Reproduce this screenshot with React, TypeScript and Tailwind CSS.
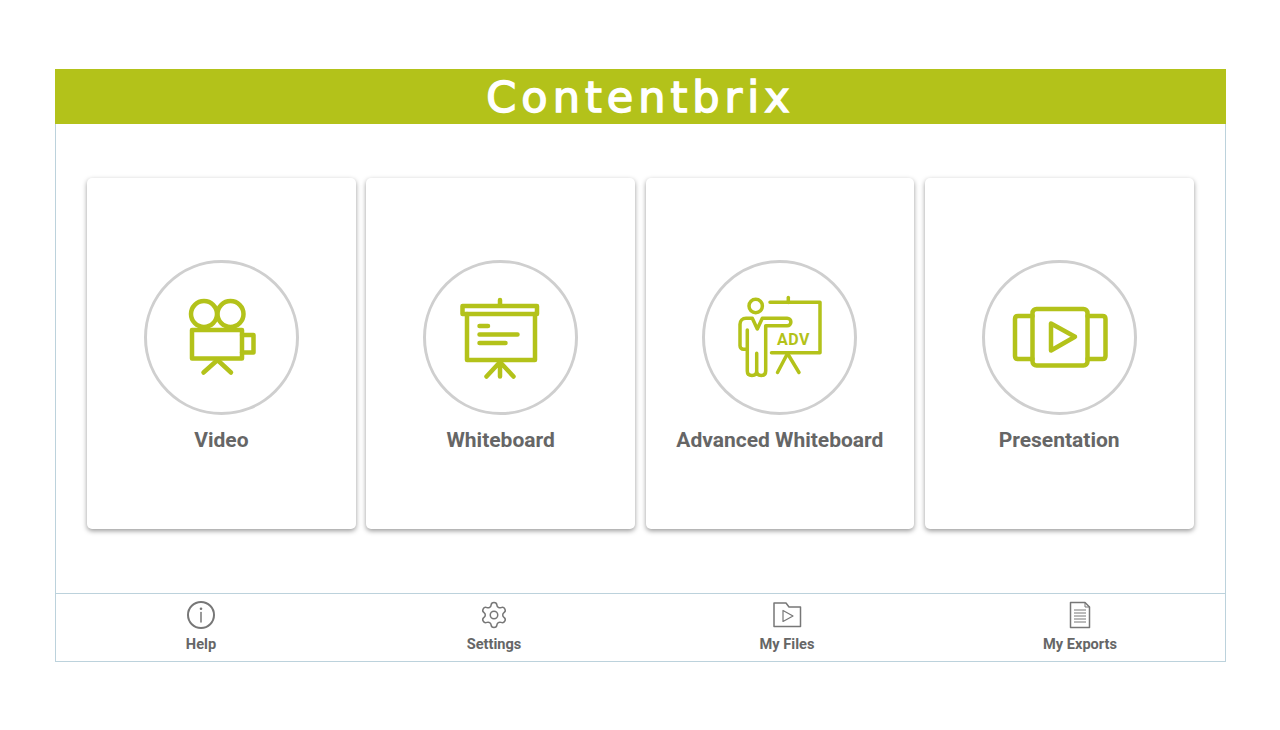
import { Settings } from 'lucide-react';
import type { ReactNode } from 'react';

const strokeProps = {
  fill: 'none',
  stroke: '#b3c21a',
  strokeWidth: 4.5,
  strokeLinecap: 'round' as const,
  strokeLinejoin: 'round' as const,
};

function VideoIcon() {
  return (
    <svg viewBox="0 0 155 155" className="w-full h-full" {...strokeProps}>
      <circle cx="60" cy="54" r="13" />
      <circle cx="86.5" cy="54" r="13" />
      <rect x="48" y="70" width="50" height="28.5" />
      <path d="M98 75h11.5v17.5H98" />
      <path d="M73.5 100 59.5 112.5M73.5 100 87 112.5" />
    </svg>
  );
}

function WhiteboardIcon() {
  return (
    <svg viewBox="0 0 155 155" className="w-full h-full" {...strokeProps}>
      <rect x="39.5" y="46" width="74.5" height="8" />
      <path d="M77 40v5" />
      <path d="M44 54v46h68V54" />
      <path d="M56.5 66H65M56.5 74.5h38M56.5 83h26" />
      <path d="M77 102 63.5 116.5M77 102v14.5M77 102l13.5 14.5" />
    </svg>
  );
}

function AdvancedIcon() {
  return (
    <svg viewBox="0 0 155 155" className="w-full h-full" {...strokeProps} strokeWidth={3.5}>
      <circle cx="53.7" cy="46" r="6.7" />
      <path d="M68 42.3h50v50.4H69.5" />
      <path d="M86.3 37.5v5" />
      <path d="M85.5 93.5 75.5 112.5M85.5 93.5l11.5 19" />
      <path d="M45.3 70v41c0 3 2 4.5 4.7 4.5s4.7-1.5 4.7-4.5V93.3M54.7 111c0 3 2 4.5 4.5 4.5s4.5-1.5 4.5-4.5V65.7h21.5c2 0 3.7-1.5 3.7-3.7s-1.7-3.7-3.7-3.7H60.3l-5 10.7-5-10.7H44c-3.5 0-6 2.5-6 6v21.5c0 2 1.5 3.5 3.5 3.5h3.8" />
      <text
        x="91.5"
        y="84.5"
        textAnchor="middle"
        fill="#b3c21a"
        stroke="none"
        fontFamily="Roboto, sans-serif"
        fontSize="16"
        fontWeight="700"
        letterSpacing="0.6"
      >
        ADV
      </text>
    </svg>
  );
}

function PresentationIcon() {
  return (
    <svg viewBox="0 0 155 155" className="w-full h-full" {...strokeProps}>
      <rect x="50.5" y="49" width="55" height="56.5" rx="4" />
      <path d="M50.5 56H36c-2 0-3 1-3 3v37c0 2 1 3 3 3h14.5" />
      <path d="M105.5 56H120.5c2 0 3 1 3 3v37c0 2-1 3-3 3H105.5" />
      <path d="M69 63.5V90.5L93 76.7Z" />
    </svg>
  );
}

function HelpIcon() {
  return (
    <svg viewBox="0 0 30 30" className="w-[30px] h-[30px]" fill="none" stroke="#777777" strokeLinecap="round">
      <circle cx="15" cy="15" r="13" strokeWidth="2" />
      <circle cx="15" cy="8.8" r="1.3" fill="#777777" stroke="none" />
      <path d="M15 12.5v9.5" strokeWidth="1.5" />
    </svg>
  );
}

function FolderPlayIcon() {
  return (
    <svg viewBox="0 0 30 30" className="w-[30px] h-[30px]" fill="none" stroke="#777777" strokeWidth="1.5" strokeLinejoin="round">
      <path d="M2 3h12l3 4h11.5v19.5H2Z" />
      <path d="M11 10.5v11L21 16Z" strokeWidth="1.2" />
    </svg>
  );
}

function ExportsIcon() {
  return (
    <svg viewBox="0 0 30 30" className="w-[30px] h-[30px]" fill="none" stroke="#777777" strokeWidth="1.5" strokeLinejoin="round">
      <path d="M5.5 2.5H20l4.5 4.5v20.5H5.5Z" />
      <path d="M20 2.5V7h4.5" strokeWidth="1" />
      <path d="M9 10h12M9 13h12M9 16h12M9 19h12M9 22h12" strokeWidth="1" />
    </svg>
  );
}

const cards: { label: string; icon: ReactNode }[] = [
  { label: 'Video', icon: <VideoIcon /> },
  { label: 'Whiteboard', icon: <WhiteboardIcon /> },
  { label: 'Advanced Whiteboard', icon: <AdvancedIcon /> },
  { label: 'Presentation', icon: <PresentationIcon /> },
];

const footerItems: { label: string; icon: ReactNode }[] = [
  { label: 'Help', icon: <HelpIcon /> },
  { label: 'Settings', icon: <Settings size={30} strokeWidth={1.2} color="#777777" /> },
  { label: 'My Files', icon: <FolderPlayIcon /> },
  { label: 'My Exports', icon: <ExportsIcon /> },
];

export default function App() {
  return (
    <div className="min-h-[730px] bg-white pt-[69px] font-['Roboto',sans-serif]">
      <div className="mx-[55px] w-[1171px] h-[593px] flex flex-col border border-t-0 border-[#bcd2dc]">
        {/* Brand header */}
        <header className="h-[55px] -mx-px pt-[2px] bg-[#b3c21a] flex items-center justify-center">
          <span className="text-[43px] leading-none tracking-[5px] text-white font-['DejaVu_Sans',sans-serif] [-webkit-text-stroke:1.5px_white]">
            Contentbrix
          </span>
        </header>

        {/* Main cards */}
        <main className="flex-1 grid grid-cols-4 gap-[10.5px] pl-[31px] pr-[31.5px] pt-[54px] pb-[64px]">
          {cards.map((card) => (
            <div
              key={card.label}
              className="flex flex-col items-center pt-[82px] rounded-[5px] bg-white shadow-[0_2px_5px_rgba(0,0,0,0.4)]"
            >
              <div className="w-[155px] h-[155px] shrink-0 rounded-full border-[3px] border-[#cfcfcf]">
                <div className="-m-[3px] w-[155px] h-[155px]">{card.icon}</div>
              </div>
              <span className="mt-[11px] text-[21px] leading-7 font-bold text-[#666666]">{card.label}</span>
            </div>
          ))}
        </main>

        {/* Bottom nav */}
        <footer className="h-[68px] -ml-[1.5px] grid grid-cols-[repeat(4,293px)] border-t border-[#bcd2dc]">
          {footerItems.map((item) => (
            <button key={item.label} className="flex flex-col items-center pt-[6px]">
              <span className="w-[30px] h-[30px]">{item.icon}</span>
              <span className="mt-[4px] text-[14.6px] leading-5 font-bold text-[#666666]">{item.label}</span>
            </button>
          ))}
        </footer>
      </div>
    </div>
  );
}
